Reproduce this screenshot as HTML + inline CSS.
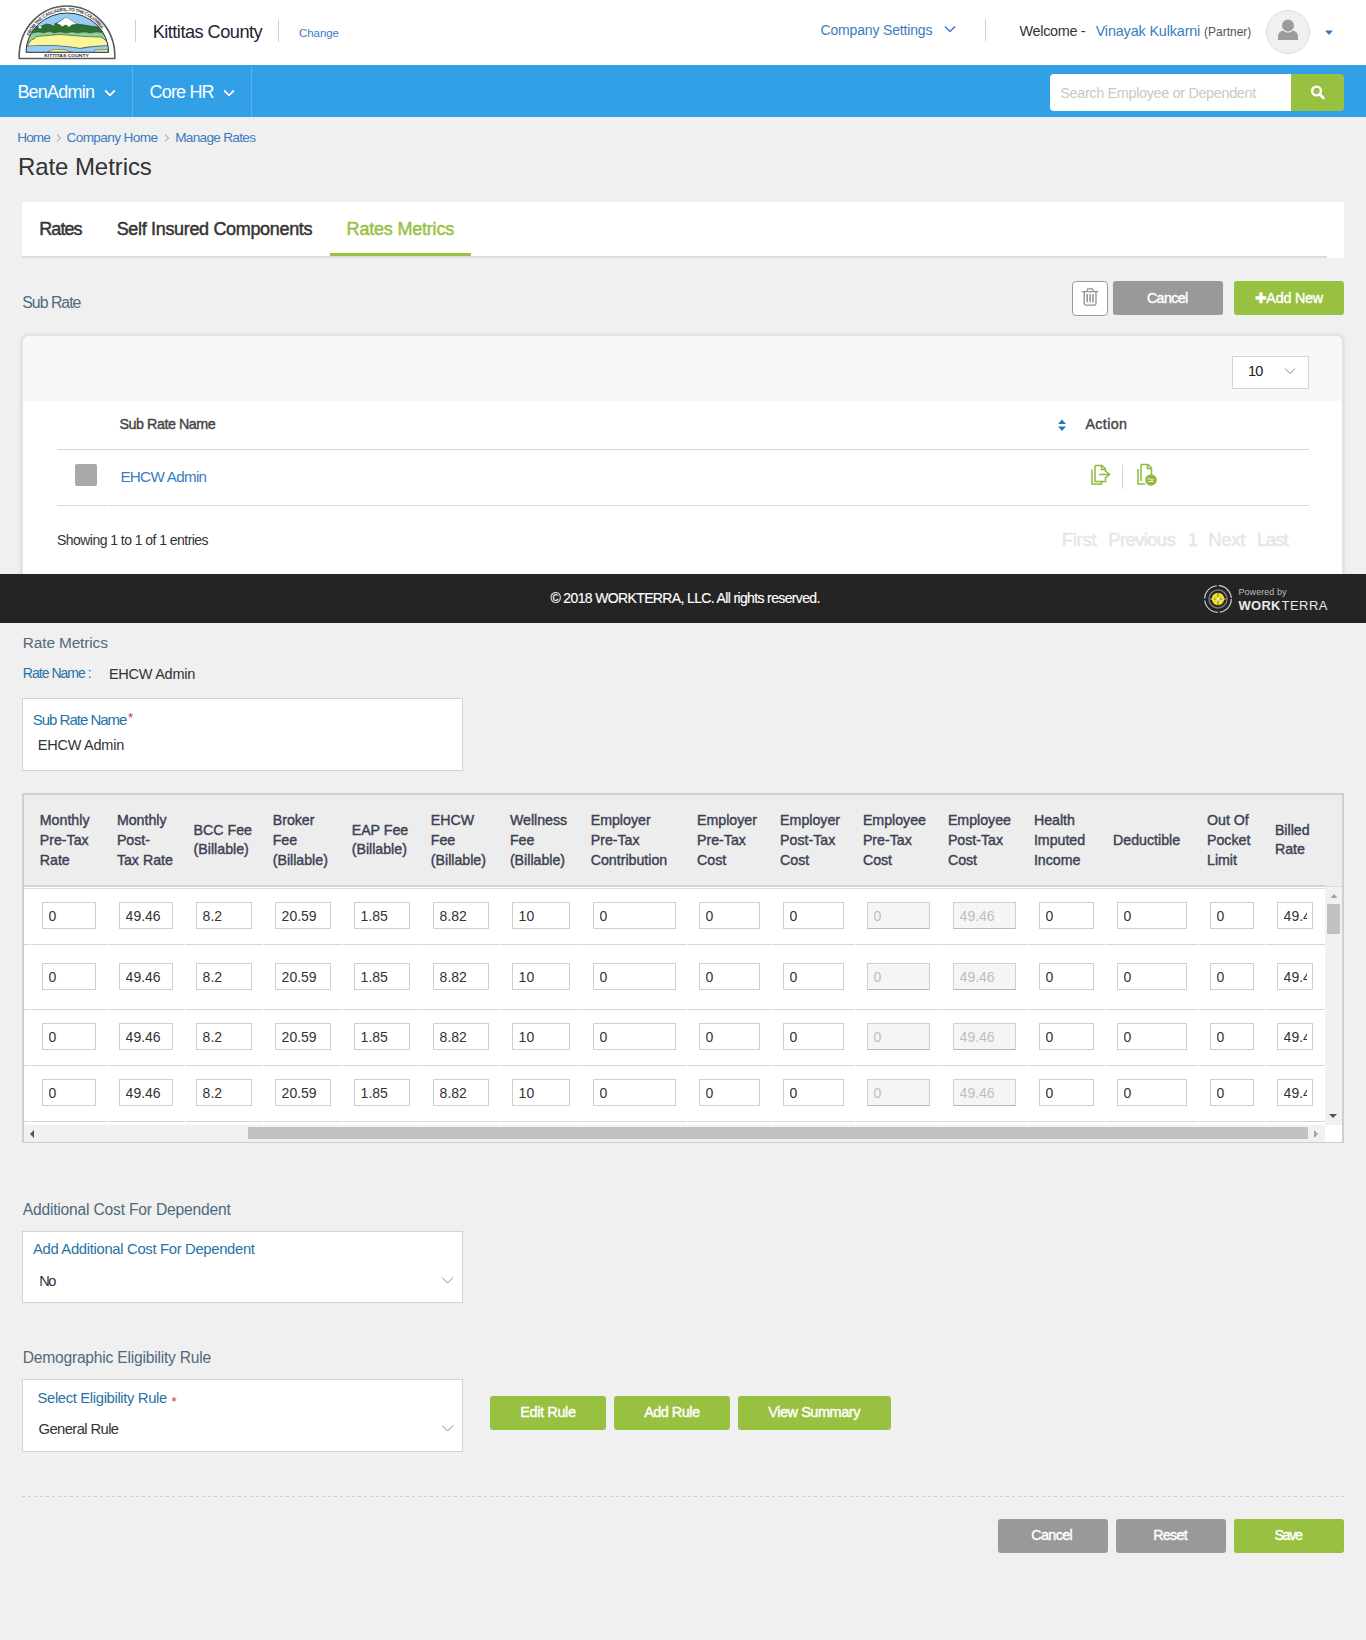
<!DOCTYPE html>
<html><head><meta charset="utf-8"><title>Rate Metrics</title>
<style>
html,body{margin:0;padding:0}
body{width:1366px;height:1640px;position:relative;overflow:hidden;background:#f0f0f0;font-family:"Liberation Sans",sans-serif}
.t{position:absolute;white-space:nowrap;line-height:1}
.b{position:absolute}
svg.b{overflow:visible}
</style></head><body>
<div class="b" style="left:0px;top:0px;width:1366px;height:65px;background:#fff"></div>
<svg class="b" style="left:15px;top:0px" width="105" height="65" viewBox="15 0 105 65">
<defs><clipPath id="lc"><path d="M26 52.3 A41.3 39.3 0 0 1 108.6 52.3 Z"/></clipPath></defs>
<path d="M19.2 58.5 L19.2 56 A47.8 50 0 0 1 114.8 56 L114.8 58.5 Z" fill="#fff" stroke="#5a5a5a" stroke-width="1.6"/>
<g clip-path="url(#lc)">
<rect x="15" y="0" width="105" height="65" fill="#98ccf7"/>
<path d="M20 30 L35 26 L40 27 L46 24 L52 25 L57 23 L66 17.3 L73 22 L77 24 L84 25 L90 26 L98 27 L110 29 L110 36 L20 36 Z" fill="#2e7034" stroke="#1d3d20" stroke-width="0.6"/>
<path d="M57 23.5 L66 17.3 L76.5 24 L72 24.5 L69 27 L66 24.5 L62 26.5 L60 24.5 Z" fill="#fff"/>
<path d="M38 27 L40 26 L42 27.5 L40 28.5 Z M51 25 L53 24 L55 25.5 Z" fill="#fff"/>
<path d="M20 36 Q26 31 33 33 Q38 31 44 33 Q49 30 54 33 Q60 31 66 33 Q72 31 78 33 Q84 31 90 33 Q97 31 104 33 L110 34 L110 40 L20 42 Z" fill="#8fd197" stroke="#2b4a2b" stroke-width="0.5"/>
<path d="M27.5 47 Q29 40 34 39 L36 36.5 L60 34.5 L85 36.5 L101 37 L104 39 L107.5 42 L107.5 46 Q90 46 80 48.5 Q55 44 27.5 47 Z" fill="#fbf59a" stroke="#3a3a2a" stroke-width="0.6"/>
<path d="M20 46.5 Q55 43.5 80 48.5 Q95 46 110 45.5 L110 53 L20 53 Z" fill="#98ccf7" stroke="#2a3a4a" stroke-width="0.5"/>
<path d="M47 52.3 Q53 48 60 49.5 Q66 49 72 52.3 Z" fill="#fbf59a" stroke="#3a3a2a" stroke-width="0.5"/>
<path d="M94 52.3 L95 50 L108 49.5 L108 52.3 Z" fill="#fbf59a" stroke="#3a3a2a" stroke-width="0.5"/>
</g>
<path d="M26 52.3 A41.3 39.3 0 0 1 108.6 52.3 Z" fill="none" stroke="#333" stroke-width="1"/>
<path d="M29.5 31 A39 37 0 0 1 105 31" fill="none" stroke="#333" stroke-width="0"/>
<path id="ringp" d="M29.55 36 A41 41 0 0 1 105.05 36" fill="none"/><text font-family="Liberation Sans" font-weight="bold" font-size="4.6" fill="#333" letter-spacing="0.1"><textPath href="#ringp" textLength="88" lengthAdjust="spacing">FROM THE CASCADES...TO THE COLUMBIA</textPath></text>
<text x="44.2" y="57.2" font-family="Liberation Sans" font-weight="bold" font-size="4.4" fill="#333" textLength="44.6" lengthAdjust="spacingAndGlyphs">KITTITAS COUNTY</text>
</svg>
<div class="b" style="left:135px;top:20px;width:1px;height:22px;background:#d0d0d0"></div>
<div class="t" style="left:152.7px;top:22.99px;font-size:18.2px;color:#1f2235;letter-spacing:-0.524px;">Kittitas County</div>
<div class="b" style="left:278px;top:20px;width:1px;height:22px;background:#d0d0d0"></div>
<div class="t" style="left:299.0px;top:28.47px;font-size:11.5px;color:#3a7cc0;letter-spacing:-0.057px;">Change</div>
<div class="t" style="left:820.5px;top:23.15px;font-size:14px;color:#3a7cc0;letter-spacing:-0.160px;">Company Settings</div>
<svg class="b" style="left:944px;top:25px" width="12" height="8" viewBox="0 0 12 8"><path d="M1 1.5 L6 6.5 L11 1.5" fill="none" stroke="#3a7cc0" stroke-width="1.5"/></svg>
<div class="b" style="left:985px;top:19px;width:1px;height:22px;background:#d0d0d0"></div>
<div class="t" style="left:1019.6px;top:24.01px;font-size:14.4px;color:#333333;letter-spacing:-0.319px;">Welcome -</div>
<div class="t" style="left:1095.7px;top:24.01px;font-size:14.4px;color:#3a7cc0;letter-spacing:-0.153px;">Vinayak Kulkarni</div>
<div class="t" style="left:1204.0px;top:26.04px;font-size:12px;color:#555;">(Partner)</div>
<div class="b" style="left:1266px;top:10px;width:44px;height:44px;background:#f0f0f0;border:1px solid #dddddd;border-radius:50%;box-sizing:border-box"></div>
<svg class="b" style="left:1266px;top:10px" width="44" height="44" viewBox="0 0 44 44"><path d="M12 30 L12 27 Q12 21 18 20.5 L26 20.5 Q32 21 32 27 L32 30 Z" fill="#9c9c9c"/><circle cx="22" cy="15.5" r="6.6" fill="#9c9c9c" stroke="#f0f0f0" stroke-width="1.2"/></svg>
<svg class="b" style="left:1324px;top:29.5px" width="10" height="6" viewBox="0 0 10 6"><path d="M1 0.5 L9 0.5 L5 5 Z" fill="#3a7cc0"/></svg>
<div class="b" style="left:0px;top:65px;width:1366px;height:52px;background:#32a0e6"></div>
<div class="b" style="left:132px;top:67px;width:1px;height:50px;background:#5cb3ec"></div>
<div class="b" style="left:251px;top:67px;width:1px;height:50px;background:#5cb3ec"></div>
<div class="t" style="left:17.4px;top:82.76px;font-size:18px;color:#fff;letter-spacing:-0.793px;">BenAdmin</div>
<svg class="b" style="left:104px;top:89px" width="12" height="8" viewBox="0 0 12 8"><path d="M1.2 1.5 L6 6.3 L10.8 1.5" fill="none" stroke="#fff" stroke-width="1.8"/></svg>
<div class="t" style="left:149.6px;top:82.76px;font-size:18px;color:#fff;letter-spacing:-0.836px;">Core HR</div>
<svg class="b" style="left:223px;top:89px" width="12" height="8" viewBox="0 0 12 8"><path d="M1.2 1.5 L6 6.3 L10.8 1.5" fill="none" stroke="#fff" stroke-width="1.8"/></svg>
<div class="b" style="left:1050px;top:74px;width:246px;height:37px;background:#fff;border-radius:4px 0 0 4px"></div>
<div class="t" style="left:1060.3px;top:85.81px;font-size:14.4px;color:#c8c8c8;letter-spacing:-0.331px;">Search Employee or Dependent</div>
<div class="b" style="left:1291px;top:74px;width:53px;height:37px;background:#99c141;border-radius:0 4px 4px 0"></div>
<svg class="b" style="left:1310px;top:85.3px" width="16" height="14" viewBox="0 0 16 14"><circle cx="6.5" cy="6" r="4.4" fill="none" stroke="#fff" stroke-width="2.4"/><path d="M9.5 9 L13.5 13" stroke="#fff" stroke-width="2.6" stroke-linecap="round"/></svg>
<div class="t" style="left:17.2px;top:130.79px;font-size:13.6px;color:#3a7cc0;letter-spacing:-0.860px;">Home</div>
<svg class="b" style="left:55px;top:133px" width="8" height="10" viewBox="0 0 8 10"><path d="M2 1.5 L5.5 5 L2 8.5" fill="none" stroke="#b5b5b5" stroke-width="1.1"/></svg>
<div class="t" style="left:66.5px;top:130.79px;font-size:13.6px;color:#3a7cc0;letter-spacing:-0.615px;">Company Home</div>
<svg class="b" style="left:163px;top:133px" width="8" height="10" viewBox="0 0 8 10"><path d="M2 1.5 L5.5 5 L2 8.5" fill="none" stroke="#b5b5b5" stroke-width="1.1"/></svg>
<div class="t" style="left:175.2px;top:130.79px;font-size:13.6px;color:#3a7cc0;letter-spacing:-0.696px;">Manage Rates</div>
<div class="t" style="left:18.0px;top:155.48px;font-size:24px;color:#333;letter-spacing:-0.082px;">Rate Metrics</div>
<div class="b" style="left:22px;top:202px;width:1322px;height:56px;background:#fff"></div>
<div class="b" style="left:22px;top:256px;width:1305px;height:2px;background:#dcdcdc"></div>
<div class="t" style="left:39.2px;top:219.86px;font-size:18px;color:#333;letter-spacing:-0.906px;-webkit-text-stroke:0.45px #333;">Rates</div>
<div class="t" style="left:116.7px;top:219.86px;font-size:18px;color:#333;letter-spacing:-0.333px;-webkit-text-stroke:0.45px #333;">Self Insured Components</div>
<div class="t" style="left:346.6px;top:219.86px;font-size:18px;color:#99c141;letter-spacing:-0.202px;-webkit-text-stroke:0.45px #99c141;">Rates Metrics</div>
<div class="b" style="left:330px;top:253px;width:141px;height:3px;background:#99c141"></div>
<div class="t" style="left:22.3px;top:294.63px;font-size:15.8px;color:#4f6a7d;letter-spacing:-0.968px;">Sub Rate</div>
<div class="b" style="left:1072px;top:281px;width:36px;height:35px;background:#fff;border:1px solid #9a9a9a;border-radius:4px;box-sizing:border-box"></div>
<svg class="b" style="left:1078px;top:284px" width="24" height="26" viewBox="1078 284 24 26"><path d="M1082.3 291.6 L1097.8 291.6" stroke="#929292" stroke-width="1.3" stroke-linecap="round"/><path d="M1086.6 291.4 L1087.8 288.8 L1092.4 288.8 L1093.6 291.4" fill="none" stroke="#929292" stroke-width="1.2"/><path d="M1084.2 292 L1084.2 303.5 Q1084.2 305.2 1086 305.2 L1094.2 305.2 Q1096 305.2 1096 303.5 L1096 292" fill="none" stroke="#929292" stroke-width="1.3"/><path d="M1087.2 294.6 L1087.2 301.8 M1090.1 294.6 L1090.1 301.8 M1093 294.6 L1093 301.8" stroke="#929292" stroke-width="1.5" stroke-linecap="round"/></svg>
<div class="b" style="left:1113px;top:281px;width:110px;height:34px;background:#999;border-radius:3px"></div>
<div class="t" style="left:1146.9px;top:291.10px;font-size:14.3px;color:#fff;letter-spacing:-0.643px;-webkit-text-stroke:0.4px #fff;">Cancel</div>
<div class="b" style="left:1234px;top:281px;width:110px;height:34px;background:#99c141;border-radius:3px"></div>
<div class="t" style="left:1254.6px;top:291.10px;font-size:14.3px;color:#fff;letter-spacing:-0.222px;-webkit-text-stroke:0.4px #fff;">✚Add New</div>
<div class="b" style="left:21px;top:334px;width:1323px;height:256px;background:#fff;border:2px solid #e3e3e3;border-radius:8px;box-sizing:border-box;box-shadow:0 0 3px rgba(0,0,0,.12)"></div>
<div class="b" style="left:23px;top:336px;width:1319px;height:65px;background:#f7f9f9;border-radius:6px 6px 0 0"></div>
<div class="b" style="left:1232px;top:356px;width:77px;height:33px;background:#fff;border:1px solid #d5d5d5;box-sizing:border-box"></div>
<div class="t" style="left:1248.0px;top:363.53px;font-size:14.5px;color:#222;letter-spacing:-0.729px;">10</div>
<svg class="b" style="left:1284px;top:367px" width="12" height="9" viewBox="0 0 12 9"><path d="M1 1.5 L6 6.5 L11 1.5" fill="none" stroke="#6f7c8a" stroke-width="0.9"/></svg>
<div class="t" style="left:119.5px;top:417.10px;font-size:14.3px;color:#444;letter-spacing:-0.462px;-webkit-text-stroke:0.4px #444;">Sub Rate Name</div>
<svg class="b" style="left:1057px;top:419px" width="11" height="13" viewBox="0 0 11 13"><path d="M1 5 L5 0.5 L9 5 Z" fill="#1f7bb8"/><path d="M1 7.5 L5 12 L9 7.5 Z" fill="#1f7bb8"/></svg>
<div class="t" style="left:1085.5px;top:417.00px;font-size:14.3px;color:#444;letter-spacing:0.331px;-webkit-text-stroke:0.4px #444;">Action</div>
<div class="b" style="left:57px;top:449px;width:1252px;height:1px;background:#d5d5d5"></div>
<div class="b" style="left:75px;top:464px;width:22px;height:22px;background:#a9a9a9;border-radius:2px"></div>
<div class="t" style="left:120.4px;top:469.33px;font-size:15.2px;color:#3a7cc0;letter-spacing:-0.690px;">EHCW Admin</div>
<svg class="b" style="left:1089px;top:463px" width="24" height="24" viewBox="0 0 24 24">
<path d="M3 6.5 L3 21 L12.5 21 L12.5 18.5" fill="none" stroke="#8dbb3a" stroke-width="1.5"/>
<path d="M6 2.5 L13 2.5 L16.5 6 L16.5 9" fill="none" stroke="#8dbb3a" stroke-width="1.5"/>
<path d="M6 2.5 L6 18.5 L16.5 18.5 L16.5 14" fill="none" stroke="#8dbb3a" stroke-width="1.5"/>
<path d="M12.5 2.5 L12.5 6.5 L16.5 6.5" fill="none" stroke="#8dbb3a" stroke-width="1.5"/>
<path d="M10 11.5 L20 11.5 M17 8.5 L20.5 11.5 L17 14.5" fill="none" stroke="#8dbb3a" stroke-width="1.5"/>
</svg>
<div class="b" style="left:1122px;top:465px;width:1px;height:24px;background:#d5d5d5"></div>
<svg class="b" style="left:1135px;top:462px" width="24" height="25" viewBox="0 0 24 25">
<path d="M3 7 L3 22 L10 22" fill="none" stroke="#8dbb3a" stroke-width="1.5"/>
<path d="M6 2.5 L13 2.5 L16.5 6 L16.5 12" fill="none" stroke="#8dbb3a" stroke-width="1.5"/>
<path d="M6 2.5 L6 19" fill="none" stroke="#8dbb3a" stroke-width="1.5"/>
<path d="M12.5 2.5 L12.5 6.5 L16.5 6.5" fill="none" stroke="#8dbb3a" stroke-width="1.5"/>
<circle cx="16" cy="18" r="5.8" fill="#8dbb3a"/>
<path d="M12.5 17.3 Q14 15.8 15.5 17.3 Q17 18.8 18.5 17.3 M13.5 19.5 L18.5 19.5" fill="none" stroke="#fff" stroke-width="0.9"/>
</svg>
<div class="b" style="left:57px;top:505px;width:51px;height:1px;background:#dcdcdc"></div>
<div class="b" style="left:109px;top:505px;width:1200px;height:1px;background:#dcdcdc"></div>
<div class="t" style="left:57.0px;top:532.95px;font-size:14px;color:#333;letter-spacing:-0.545px;">Showing 1 to 1 of 1 entries</div>
<div class="t" style="left:1061.7px;top:531.14px;font-size:18.5px;color:#e6e6e6;letter-spacing:-0.266px;-webkit-text-stroke:0.45px #e6e6e6;">First</div>
<div class="t" style="left:1108.2px;top:531.14px;font-size:18.5px;color:#e6e6e6;letter-spacing:-0.626px;-webkit-text-stroke:0.45px #e6e6e6;">Previous</div>
<div class="t" style="left:1187.7px;top:531.14px;font-size:18.5px;color:#e6e6e6;letter-spacing:-1.889px;-webkit-text-stroke:0.45px #e6e6e6;">1</div>
<div class="t" style="left:1208.2px;top:531.14px;font-size:18.5px;color:#e6e6e6;letter-spacing:-0.313px;-webkit-text-stroke:0.45px #e6e6e6;">Next</div>
<div class="t" style="left:1256.9px;top:531.14px;font-size:18.5px;color:#e6e6e6;letter-spacing:-1.056px;-webkit-text-stroke:0.45px #e6e6e6;">Last</div>
<div class="b" style="left:0px;top:574px;width:1366px;height:49px;background:#242424"></div>
<div class="t" style="left:550.4px;top:591.25px;font-size:14px;color:#fff;letter-spacing:-0.634px;-webkit-text-stroke:0.15px #fff;">© 2018 WORKTERRA, LLC. All rights reserved.</div>
<svg class="b" style="left:1203px;top:584px" width="30" height="30" viewBox="0 0 30 30">
<circle cx="15" cy="15" r="13.3" fill="none" stroke="#d0d0d0" stroke-width="1.2" stroke-dasharray="19 2"/>
<circle cx="15" cy="15" r="9" fill="none" stroke="#777" stroke-width="1.5"/>
<circle cx="15" cy="15" r="6.2" fill="#f2e21a"/>
<path d="M15 9 L15 21 M9 15 L21 15" stroke="#6a6a3a" stroke-width="0.9"/>
<path d="M15 12.5 L15.8 14.2 L17.5 15 L15.8 15.8 L15 17.5 L14.2 15.8 L12.5 15 L14.2 14.2 Z" fill="#fff"/>
<path d="M7.5 15 L11 15 M19 15 L22.5 15" stroke="#fff" stroke-width="1"/>
</svg>
<div class="t" style="left:1238.5px;top:587.88px;font-size:9px;color:#bdbdbd;letter-spacing:0.052px;">Powered by</div>
<div class="t" style="left:1238.5px;top:598.50px;font-size:13px;color:#e8e8e8;font-weight:bold;letter-spacing:0.281px;">WORK</div>
<div class="t" style="left:1281.5px;top:598.50px;font-size:13px;color:#e8e8e8;letter-spacing:0.485px;">TERRA</div>
<div class="t" style="left:22.8px;top:634.76px;font-size:15.4px;color:#4f6a7d;letter-spacing:-0.121px;">Rate Metrics</div>
<div class="t" style="left:22.8px;top:665.85px;font-size:14px;color:#2673a6;letter-spacing:-0.969px;">Rate Name :</div>
<div class="t" style="left:108.9px;top:666.73px;font-size:14.5px;color:#333;letter-spacing:-0.248px;">EHCW Admin</div>
<div class="b" style="left:22px;top:698px;width:441px;height:73px;background:#fff;border:1px solid #d3d3d3;box-sizing:border-box"></div>
<div class="t" style="left:32.8px;top:711.60px;font-size:15px;color:#2673a6;letter-spacing:-1.010px;">Sub Rate Name</div>
<div class="t" style="left:128.0px;top:711.00px;font-size:13px;color:#e3262b;">*</div>
<div class="t" style="left:37.8px;top:738.33px;font-size:14.5px;color:#333;letter-spacing:-0.248px;">EHCW Admin</div>
<div class="b" style="left:22px;top:793px;width:1322px;height:350px;background:#fff;border:2px solid #cfcfcf;box-sizing:border-box"></div>
<div class="b" style="left:24px;top:795px;width:1318px;height:90px;background:#ededed"></div>
<div class="b" style="left:24px;top:885px;width:1301px;height:2px;background:#d4d4d4"></div>
<div class="b" style="left:24px;top:888px;width:1301px;height:1px;background:#dedede"></div>
<div class="b" style="left:1325px;top:885px;width:17px;height:1px;background:#ededed"></div>
<div class="b" style="left:1325px;top:886px;width:17px;height:1px;background:#d9d9d9"></div>
<div class="t" style="left:39.8px;top:812.88px;font-size:14.2px;color:#3c4152;-webkit-text-stroke:0.4px #3c4152;">Monthly</div>
<div class="t" style="left:39.8px;top:832.58px;font-size:14.2px;color:#3c4152;-webkit-text-stroke:0.4px #3c4152;">Pre-Tax</div>
<div class="t" style="left:39.8px;top:852.58px;font-size:14.2px;color:#3c4152;-webkit-text-stroke:0.4px #3c4152;">Rate</div>
<div class="t" style="left:116.9px;top:812.88px;font-size:14.2px;color:#3c4152;-webkit-text-stroke:0.4px #3c4152;">Monthly</div>
<div class="t" style="left:116.9px;top:832.58px;font-size:14.2px;color:#3c4152;-webkit-text-stroke:0.4px #3c4152;">Post-</div>
<div class="t" style="left:116.9px;top:852.58px;font-size:14.2px;color:#3c4152;-webkit-text-stroke:0.4px #3c4152;">Tax Rate</div>
<div class="t" style="left:193.6px;top:822.78px;font-size:14.2px;color:#3c4152;-webkit-text-stroke:0.4px #3c4152;">BCC Fee</div>
<div class="t" style="left:193.6px;top:842.48px;font-size:14.2px;color:#3c4152;-webkit-text-stroke:0.4px #3c4152;">(Billable)</div>
<div class="t" style="left:272.7px;top:812.88px;font-size:14.2px;color:#3c4152;-webkit-text-stroke:0.4px #3c4152;">Broker</div>
<div class="t" style="left:272.7px;top:832.58px;font-size:14.2px;color:#3c4152;-webkit-text-stroke:0.4px #3c4152;">Fee</div>
<div class="t" style="left:272.7px;top:852.58px;font-size:14.2px;color:#3c4152;-webkit-text-stroke:0.4px #3c4152;">(Billable)</div>
<div class="t" style="left:351.7px;top:822.78px;font-size:14.2px;color:#3c4152;-webkit-text-stroke:0.4px #3c4152;">EAP Fee</div>
<div class="t" style="left:351.7px;top:842.48px;font-size:14.2px;color:#3c4152;-webkit-text-stroke:0.4px #3c4152;">(Billable)</div>
<div class="t" style="left:430.8px;top:812.88px;font-size:14.2px;color:#3c4152;-webkit-text-stroke:0.4px #3c4152;">EHCW</div>
<div class="t" style="left:430.8px;top:832.58px;font-size:14.2px;color:#3c4152;-webkit-text-stroke:0.4px #3c4152;">Fee</div>
<div class="t" style="left:430.8px;top:852.58px;font-size:14.2px;color:#3c4152;-webkit-text-stroke:0.4px #3c4152;">(Billable)</div>
<div class="t" style="left:509.9px;top:812.88px;font-size:14.2px;color:#3c4152;-webkit-text-stroke:0.4px #3c4152;">Wellness</div>
<div class="t" style="left:509.9px;top:832.58px;font-size:14.2px;color:#3c4152;-webkit-text-stroke:0.4px #3c4152;">Fee</div>
<div class="t" style="left:509.9px;top:852.58px;font-size:14.2px;color:#3c4152;-webkit-text-stroke:0.4px #3c4152;">(Billable)</div>
<div class="t" style="left:590.7px;top:812.88px;font-size:14.2px;color:#3c4152;-webkit-text-stroke:0.4px #3c4152;">Employer</div>
<div class="t" style="left:590.7px;top:832.58px;font-size:14.2px;color:#3c4152;-webkit-text-stroke:0.4px #3c4152;">Pre-Tax</div>
<div class="t" style="left:590.7px;top:852.58px;font-size:14.2px;color:#3c4152;-webkit-text-stroke:0.4px #3c4152;">Contribution</div>
<div class="t" style="left:697.0px;top:812.88px;font-size:14.2px;color:#3c4152;-webkit-text-stroke:0.4px #3c4152;">Employer</div>
<div class="t" style="left:697.0px;top:832.58px;font-size:14.2px;color:#3c4152;-webkit-text-stroke:0.4px #3c4152;">Pre-Tax</div>
<div class="t" style="left:697.0px;top:852.58px;font-size:14.2px;color:#3c4152;-webkit-text-stroke:0.4px #3c4152;">Cost</div>
<div class="t" style="left:780.1px;top:812.88px;font-size:14.2px;color:#3c4152;-webkit-text-stroke:0.4px #3c4152;">Employer</div>
<div class="t" style="left:780.1px;top:832.58px;font-size:14.2px;color:#3c4152;-webkit-text-stroke:0.4px #3c4152;">Post-Tax</div>
<div class="t" style="left:780.1px;top:852.58px;font-size:14.2px;color:#3c4152;-webkit-text-stroke:0.4px #3c4152;">Cost</div>
<div class="t" style="left:862.9px;top:812.88px;font-size:14.2px;color:#3c4152;-webkit-text-stroke:0.4px #3c4152;">Employee</div>
<div class="t" style="left:862.9px;top:832.58px;font-size:14.2px;color:#3c4152;-webkit-text-stroke:0.4px #3c4152;">Pre-Tax</div>
<div class="t" style="left:862.9px;top:852.58px;font-size:14.2px;color:#3c4152;-webkit-text-stroke:0.4px #3c4152;">Cost</div>
<div class="t" style="left:947.9px;top:812.88px;font-size:14.2px;color:#3c4152;-webkit-text-stroke:0.4px #3c4152;">Employee</div>
<div class="t" style="left:947.9px;top:832.58px;font-size:14.2px;color:#3c4152;-webkit-text-stroke:0.4px #3c4152;">Post-Tax</div>
<div class="t" style="left:947.9px;top:852.58px;font-size:14.2px;color:#3c4152;-webkit-text-stroke:0.4px #3c4152;">Cost</div>
<div class="t" style="left:1033.9px;top:812.88px;font-size:14.2px;color:#3c4152;-webkit-text-stroke:0.4px #3c4152;">Health</div>
<div class="t" style="left:1033.9px;top:832.58px;font-size:14.2px;color:#3c4152;-webkit-text-stroke:0.4px #3c4152;">Imputed</div>
<div class="t" style="left:1033.9px;top:852.58px;font-size:14.2px;color:#3c4152;-webkit-text-stroke:0.4px #3c4152;">Income</div>
<div class="t" style="left:1113.1px;top:832.58px;font-size:14.2px;color:#3c4152;-webkit-text-stroke:0.4px #3c4152;">Deductible</div>
<div class="t" style="left:1207.0px;top:812.88px;font-size:14.2px;color:#3c4152;-webkit-text-stroke:0.4px #3c4152;">Out Of</div>
<div class="t" style="left:1207.0px;top:832.58px;font-size:14.2px;color:#3c4152;-webkit-text-stroke:0.4px #3c4152;">Pocket</div>
<div class="t" style="left:1207.0px;top:852.58px;font-size:14.2px;color:#3c4152;-webkit-text-stroke:0.4px #3c4152;">Limit</div>
<div class="t" style="left:1274.9px;top:822.78px;font-size:14.2px;color:#3c4152;-webkit-text-stroke:0.4px #3c4152;">Billed</div>
<div class="t" style="left:1274.9px;top:842.48px;font-size:14.2px;color:#3c4152;-webkit-text-stroke:0.4px #3c4152;">Rate</div>
<div class="b" style="left:24px;top:889px;width:1301px;height:236px;overflow:hidden">
<div class="b" style="left:0px;top:55px;width:6px;height:1px;background:#d6d6d6"></div>
<div class="b" style="left:7px;top:55px;width:76px;height:1px;background:#d6d6d6"></div>
<div class="b" style="left:18px;top:13px;width:54px;height:27px;box-sizing:border-box;background:#fff;border:1px solid #cfcfcf;"><div class="b" style="left:5.6px;top:0;width:41.4px;height:25px;overflow:hidden"><div class="t" style="left:0;top:6.25px;font-size:14px;color:#333">0</div></div></div>
<div class="b" style="left:84px;top:55px;width:76px;height:1px;background:#d6d6d6"></div>
<div class="b" style="left:95px;top:13px;width:54px;height:27px;box-sizing:border-box;background:#fff;border:1px solid #cfcfcf;"><div class="b" style="left:5.6px;top:0;width:41.4px;height:25px;overflow:hidden"><div class="t" style="left:0;top:6.25px;font-size:14px;color:#333">49.46</div></div></div>
<div class="b" style="left:161px;top:55px;width:78px;height:1px;background:#d6d6d6"></div>
<div class="b" style="left:172px;top:13px;width:56px;height:27px;box-sizing:border-box;background:#fff;border:1px solid #cfcfcf;"><div class="b" style="left:5.6px;top:0;width:43.4px;height:25px;overflow:hidden"><div class="t" style="left:0;top:6.25px;font-size:14px;color:#333">8.2</div></div></div>
<div class="b" style="left:240px;top:55px;width:78px;height:1px;background:#d6d6d6"></div>
<div class="b" style="left:251px;top:13px;width:56px;height:27px;box-sizing:border-box;background:#fff;border:1px solid #cfcfcf;"><div class="b" style="left:5.6px;top:0;width:43.4px;height:25px;overflow:hidden"><div class="t" style="left:0;top:6.25px;font-size:14px;color:#333">20.59</div></div></div>
<div class="b" style="left:319px;top:55px;width:78px;height:1px;background:#d6d6d6"></div>
<div class="b" style="left:330px;top:13px;width:56px;height:27px;box-sizing:border-box;background:#fff;border:1px solid #cfcfcf;"><div class="b" style="left:5.6px;top:0;width:43.4px;height:25px;overflow:hidden"><div class="t" style="left:0;top:6.25px;font-size:14px;color:#333">1.85</div></div></div>
<div class="b" style="left:398px;top:55px;width:78px;height:1px;background:#d6d6d6"></div>
<div class="b" style="left:409px;top:13px;width:56px;height:27px;box-sizing:border-box;background:#fff;border:1px solid #cfcfcf;"><div class="b" style="left:5.6px;top:0;width:43.4px;height:25px;overflow:hidden"><div class="t" style="left:0;top:6.25px;font-size:14px;color:#333">8.82</div></div></div>
<div class="b" style="left:477px;top:55px;width:80px;height:1px;background:#d6d6d6"></div>
<div class="b" style="left:488px;top:13px;width:58px;height:27px;box-sizing:border-box;background:#fff;border:1px solid #cfcfcf;"><div class="b" style="left:5.6px;top:0;width:45.4px;height:25px;overflow:hidden"><div class="t" style="left:0;top:6.25px;font-size:14px;color:#333">10</div></div></div>
<div class="b" style="left:558px;top:55px;width:105px;height:1px;background:#d6d6d6"></div>
<div class="b" style="left:569px;top:13px;width:83px;height:27px;box-sizing:border-box;background:#fff;border:1px solid #cfcfcf;"><div class="b" style="left:5.6px;top:0;width:70.4px;height:25px;overflow:hidden"><div class="t" style="left:0;top:6.25px;font-size:14px;color:#333">0</div></div></div>
<div class="b" style="left:664px;top:55px;width:83px;height:1px;background:#d6d6d6"></div>
<div class="b" style="left:675px;top:13px;width:61px;height:27px;box-sizing:border-box;background:#fff;border:1px solid #cfcfcf;"><div class="b" style="left:5.6px;top:0;width:48.4px;height:25px;overflow:hidden"><div class="t" style="left:0;top:6.25px;font-size:14px;color:#333">0</div></div></div>
<div class="b" style="left:748px;top:55px;width:83px;height:1px;background:#d6d6d6"></div>
<div class="b" style="left:759px;top:13px;width:61px;height:27px;box-sizing:border-box;background:#fff;border:1px solid #cfcfcf;"><div class="b" style="left:5.6px;top:0;width:48.4px;height:25px;overflow:hidden"><div class="t" style="left:0;top:6.25px;font-size:14px;color:#333">0</div></div></div>
<div class="b" style="left:832px;top:55px;width:85px;height:1px;background:#d6d6d6"></div>
<div class="b" style="left:843px;top:13px;width:63px;height:27px;box-sizing:border-box;background:#f5f5f5;border:1px solid #cfcfcf;border-bottom:1.5px solid #b9b9b9;"><div class="b" style="left:5.6px;top:0;width:50.4px;height:25px;overflow:hidden"><div class="t" style="left:0;top:6.25px;font-size:14px;color:#bdbdbd">0</div></div></div>
<div class="b" style="left:918px;top:55px;width:85px;height:1px;background:#d6d6d6"></div>
<div class="b" style="left:929px;top:13px;width:63px;height:27px;box-sizing:border-box;background:#f5f5f5;border:1px solid #cfcfcf;border-bottom:1.5px solid #b9b9b9;"><div class="b" style="left:5.6px;top:0;width:50.4px;height:25px;overflow:hidden"><div class="t" style="left:0;top:6.25px;font-size:14px;color:#bdbdbd">49.46</div></div></div>
<div class="b" style="left:1004px;top:55px;width:77px;height:1px;background:#d6d6d6"></div>
<div class="b" style="left:1015px;top:13px;width:55px;height:27px;box-sizing:border-box;background:#fff;border:1px solid #cfcfcf;"><div class="b" style="left:5.6px;top:0;width:42.4px;height:25px;overflow:hidden"><div class="t" style="left:0;top:6.25px;font-size:14px;color:#333">0</div></div></div>
<div class="b" style="left:1082px;top:55px;width:92px;height:1px;background:#d6d6d6"></div>
<div class="b" style="left:1093px;top:13px;width:70px;height:27px;box-sizing:border-box;background:#fff;border:1px solid #cfcfcf;"><div class="b" style="left:5.6px;top:0;width:57.4px;height:25px;overflow:hidden"><div class="t" style="left:0;top:6.25px;font-size:14px;color:#333">0</div></div></div>
<div class="b" style="left:1175px;top:55px;width:66px;height:1px;background:#d6d6d6"></div>
<div class="b" style="left:1186px;top:13px;width:44px;height:27px;box-sizing:border-box;background:#fff;border:1px solid #cfcfcf;"><div class="b" style="left:5.6px;top:0;width:31.4px;height:25px;overflow:hidden"><div class="t" style="left:0;top:6.25px;font-size:14px;color:#333">0</div></div></div>
<div class="b" style="left:1242px;top:55px;width:74px;height:1px;background:#d6d6d6"></div>
<div class="b" style="left:1253px;top:13px;width:36px;height:27px;box-sizing:border-box;background:#fff;border:1px solid #cfcfcf;"><div class="b" style="left:5.6px;top:0;width:23.4px;height:25px;overflow:hidden"><div class="t" style="left:0;top:6.25px;font-size:14px;color:#333">49.4</div></div></div>
<div class="b" style="left:0px;top:120px;width:6px;height:1px;background:#d6d6d6"></div>
<div class="b" style="left:7px;top:120px;width:76px;height:1px;background:#d6d6d6"></div>
<div class="b" style="left:18px;top:74px;width:54px;height:27px;box-sizing:border-box;background:#fff;border:1px solid #cfcfcf;"><div class="b" style="left:5.6px;top:0;width:41.4px;height:25px;overflow:hidden"><div class="t" style="left:0;top:6.25px;font-size:14px;color:#333">0</div></div></div>
<div class="b" style="left:84px;top:120px;width:76px;height:1px;background:#d6d6d6"></div>
<div class="b" style="left:95px;top:74px;width:54px;height:27px;box-sizing:border-box;background:#fff;border:1px solid #cfcfcf;"><div class="b" style="left:5.6px;top:0;width:41.4px;height:25px;overflow:hidden"><div class="t" style="left:0;top:6.25px;font-size:14px;color:#333">49.46</div></div></div>
<div class="b" style="left:161px;top:120px;width:78px;height:1px;background:#d6d6d6"></div>
<div class="b" style="left:172px;top:74px;width:56px;height:27px;box-sizing:border-box;background:#fff;border:1px solid #cfcfcf;"><div class="b" style="left:5.6px;top:0;width:43.4px;height:25px;overflow:hidden"><div class="t" style="left:0;top:6.25px;font-size:14px;color:#333">8.2</div></div></div>
<div class="b" style="left:240px;top:120px;width:78px;height:1px;background:#d6d6d6"></div>
<div class="b" style="left:251px;top:74px;width:56px;height:27px;box-sizing:border-box;background:#fff;border:1px solid #cfcfcf;"><div class="b" style="left:5.6px;top:0;width:43.4px;height:25px;overflow:hidden"><div class="t" style="left:0;top:6.25px;font-size:14px;color:#333">20.59</div></div></div>
<div class="b" style="left:319px;top:120px;width:78px;height:1px;background:#d6d6d6"></div>
<div class="b" style="left:330px;top:74px;width:56px;height:27px;box-sizing:border-box;background:#fff;border:1px solid #cfcfcf;"><div class="b" style="left:5.6px;top:0;width:43.4px;height:25px;overflow:hidden"><div class="t" style="left:0;top:6.25px;font-size:14px;color:#333">1.85</div></div></div>
<div class="b" style="left:398px;top:120px;width:78px;height:1px;background:#d6d6d6"></div>
<div class="b" style="left:409px;top:74px;width:56px;height:27px;box-sizing:border-box;background:#fff;border:1px solid #cfcfcf;"><div class="b" style="left:5.6px;top:0;width:43.4px;height:25px;overflow:hidden"><div class="t" style="left:0;top:6.25px;font-size:14px;color:#333">8.82</div></div></div>
<div class="b" style="left:477px;top:120px;width:80px;height:1px;background:#d6d6d6"></div>
<div class="b" style="left:488px;top:74px;width:58px;height:27px;box-sizing:border-box;background:#fff;border:1px solid #cfcfcf;"><div class="b" style="left:5.6px;top:0;width:45.4px;height:25px;overflow:hidden"><div class="t" style="left:0;top:6.25px;font-size:14px;color:#333">10</div></div></div>
<div class="b" style="left:558px;top:120px;width:105px;height:1px;background:#d6d6d6"></div>
<div class="b" style="left:569px;top:74px;width:83px;height:27px;box-sizing:border-box;background:#fff;border:1px solid #cfcfcf;"><div class="b" style="left:5.6px;top:0;width:70.4px;height:25px;overflow:hidden"><div class="t" style="left:0;top:6.25px;font-size:14px;color:#333">0</div></div></div>
<div class="b" style="left:664px;top:120px;width:83px;height:1px;background:#d6d6d6"></div>
<div class="b" style="left:675px;top:74px;width:61px;height:27px;box-sizing:border-box;background:#fff;border:1px solid #cfcfcf;"><div class="b" style="left:5.6px;top:0;width:48.4px;height:25px;overflow:hidden"><div class="t" style="left:0;top:6.25px;font-size:14px;color:#333">0</div></div></div>
<div class="b" style="left:748px;top:120px;width:83px;height:1px;background:#d6d6d6"></div>
<div class="b" style="left:759px;top:74px;width:61px;height:27px;box-sizing:border-box;background:#fff;border:1px solid #cfcfcf;"><div class="b" style="left:5.6px;top:0;width:48.4px;height:25px;overflow:hidden"><div class="t" style="left:0;top:6.25px;font-size:14px;color:#333">0</div></div></div>
<div class="b" style="left:832px;top:120px;width:85px;height:1px;background:#d6d6d6"></div>
<div class="b" style="left:843px;top:74px;width:63px;height:27px;box-sizing:border-box;background:#f5f5f5;border:1px solid #cfcfcf;border-bottom:1.5px solid #b9b9b9;"><div class="b" style="left:5.6px;top:0;width:50.4px;height:25px;overflow:hidden"><div class="t" style="left:0;top:6.25px;font-size:14px;color:#bdbdbd">0</div></div></div>
<div class="b" style="left:918px;top:120px;width:85px;height:1px;background:#d6d6d6"></div>
<div class="b" style="left:929px;top:74px;width:63px;height:27px;box-sizing:border-box;background:#f5f5f5;border:1px solid #cfcfcf;border-bottom:1.5px solid #b9b9b9;"><div class="b" style="left:5.6px;top:0;width:50.4px;height:25px;overflow:hidden"><div class="t" style="left:0;top:6.25px;font-size:14px;color:#bdbdbd">49.46</div></div></div>
<div class="b" style="left:1004px;top:120px;width:77px;height:1px;background:#d6d6d6"></div>
<div class="b" style="left:1015px;top:74px;width:55px;height:27px;box-sizing:border-box;background:#fff;border:1px solid #cfcfcf;"><div class="b" style="left:5.6px;top:0;width:42.4px;height:25px;overflow:hidden"><div class="t" style="left:0;top:6.25px;font-size:14px;color:#333">0</div></div></div>
<div class="b" style="left:1082px;top:120px;width:92px;height:1px;background:#d6d6d6"></div>
<div class="b" style="left:1093px;top:74px;width:70px;height:27px;box-sizing:border-box;background:#fff;border:1px solid #cfcfcf;"><div class="b" style="left:5.6px;top:0;width:57.4px;height:25px;overflow:hidden"><div class="t" style="left:0;top:6.25px;font-size:14px;color:#333">0</div></div></div>
<div class="b" style="left:1175px;top:120px;width:66px;height:1px;background:#d6d6d6"></div>
<div class="b" style="left:1186px;top:74px;width:44px;height:27px;box-sizing:border-box;background:#fff;border:1px solid #cfcfcf;"><div class="b" style="left:5.6px;top:0;width:31.4px;height:25px;overflow:hidden"><div class="t" style="left:0;top:6.25px;font-size:14px;color:#333">0</div></div></div>
<div class="b" style="left:1242px;top:120px;width:74px;height:1px;background:#d6d6d6"></div>
<div class="b" style="left:1253px;top:74px;width:36px;height:27px;box-sizing:border-box;background:#fff;border:1px solid #cfcfcf;"><div class="b" style="left:5.6px;top:0;width:23.4px;height:25px;overflow:hidden"><div class="t" style="left:0;top:6.25px;font-size:14px;color:#333">49.4</div></div></div>
<div class="b" style="left:0px;top:176px;width:6px;height:1px;background:#d6d6d6"></div>
<div class="b" style="left:7px;top:176px;width:76px;height:1px;background:#d6d6d6"></div>
<div class="b" style="left:18px;top:134px;width:54px;height:27px;box-sizing:border-box;background:#fff;border:1px solid #cfcfcf;"><div class="b" style="left:5.6px;top:0;width:41.4px;height:25px;overflow:hidden"><div class="t" style="left:0;top:6.25px;font-size:14px;color:#333">0</div></div></div>
<div class="b" style="left:84px;top:176px;width:76px;height:1px;background:#d6d6d6"></div>
<div class="b" style="left:95px;top:134px;width:54px;height:27px;box-sizing:border-box;background:#fff;border:1px solid #cfcfcf;"><div class="b" style="left:5.6px;top:0;width:41.4px;height:25px;overflow:hidden"><div class="t" style="left:0;top:6.25px;font-size:14px;color:#333">49.46</div></div></div>
<div class="b" style="left:161px;top:176px;width:78px;height:1px;background:#d6d6d6"></div>
<div class="b" style="left:172px;top:134px;width:56px;height:27px;box-sizing:border-box;background:#fff;border:1px solid #cfcfcf;"><div class="b" style="left:5.6px;top:0;width:43.4px;height:25px;overflow:hidden"><div class="t" style="left:0;top:6.25px;font-size:14px;color:#333">8.2</div></div></div>
<div class="b" style="left:240px;top:176px;width:78px;height:1px;background:#d6d6d6"></div>
<div class="b" style="left:251px;top:134px;width:56px;height:27px;box-sizing:border-box;background:#fff;border:1px solid #cfcfcf;"><div class="b" style="left:5.6px;top:0;width:43.4px;height:25px;overflow:hidden"><div class="t" style="left:0;top:6.25px;font-size:14px;color:#333">20.59</div></div></div>
<div class="b" style="left:319px;top:176px;width:78px;height:1px;background:#d6d6d6"></div>
<div class="b" style="left:330px;top:134px;width:56px;height:27px;box-sizing:border-box;background:#fff;border:1px solid #cfcfcf;"><div class="b" style="left:5.6px;top:0;width:43.4px;height:25px;overflow:hidden"><div class="t" style="left:0;top:6.25px;font-size:14px;color:#333">1.85</div></div></div>
<div class="b" style="left:398px;top:176px;width:78px;height:1px;background:#d6d6d6"></div>
<div class="b" style="left:409px;top:134px;width:56px;height:27px;box-sizing:border-box;background:#fff;border:1px solid #cfcfcf;"><div class="b" style="left:5.6px;top:0;width:43.4px;height:25px;overflow:hidden"><div class="t" style="left:0;top:6.25px;font-size:14px;color:#333">8.82</div></div></div>
<div class="b" style="left:477px;top:176px;width:80px;height:1px;background:#d6d6d6"></div>
<div class="b" style="left:488px;top:134px;width:58px;height:27px;box-sizing:border-box;background:#fff;border:1px solid #cfcfcf;"><div class="b" style="left:5.6px;top:0;width:45.4px;height:25px;overflow:hidden"><div class="t" style="left:0;top:6.25px;font-size:14px;color:#333">10</div></div></div>
<div class="b" style="left:558px;top:176px;width:105px;height:1px;background:#d6d6d6"></div>
<div class="b" style="left:569px;top:134px;width:83px;height:27px;box-sizing:border-box;background:#fff;border:1px solid #cfcfcf;"><div class="b" style="left:5.6px;top:0;width:70.4px;height:25px;overflow:hidden"><div class="t" style="left:0;top:6.25px;font-size:14px;color:#333">0</div></div></div>
<div class="b" style="left:664px;top:176px;width:83px;height:1px;background:#d6d6d6"></div>
<div class="b" style="left:675px;top:134px;width:61px;height:27px;box-sizing:border-box;background:#fff;border:1px solid #cfcfcf;"><div class="b" style="left:5.6px;top:0;width:48.4px;height:25px;overflow:hidden"><div class="t" style="left:0;top:6.25px;font-size:14px;color:#333">0</div></div></div>
<div class="b" style="left:748px;top:176px;width:83px;height:1px;background:#d6d6d6"></div>
<div class="b" style="left:759px;top:134px;width:61px;height:27px;box-sizing:border-box;background:#fff;border:1px solid #cfcfcf;"><div class="b" style="left:5.6px;top:0;width:48.4px;height:25px;overflow:hidden"><div class="t" style="left:0;top:6.25px;font-size:14px;color:#333">0</div></div></div>
<div class="b" style="left:832px;top:176px;width:85px;height:1px;background:#d6d6d6"></div>
<div class="b" style="left:843px;top:134px;width:63px;height:27px;box-sizing:border-box;background:#f5f5f5;border:1px solid #cfcfcf;border-bottom:1.5px solid #b9b9b9;"><div class="b" style="left:5.6px;top:0;width:50.4px;height:25px;overflow:hidden"><div class="t" style="left:0;top:6.25px;font-size:14px;color:#bdbdbd">0</div></div></div>
<div class="b" style="left:918px;top:176px;width:85px;height:1px;background:#d6d6d6"></div>
<div class="b" style="left:929px;top:134px;width:63px;height:27px;box-sizing:border-box;background:#f5f5f5;border:1px solid #cfcfcf;border-bottom:1.5px solid #b9b9b9;"><div class="b" style="left:5.6px;top:0;width:50.4px;height:25px;overflow:hidden"><div class="t" style="left:0;top:6.25px;font-size:14px;color:#bdbdbd">49.46</div></div></div>
<div class="b" style="left:1004px;top:176px;width:77px;height:1px;background:#d6d6d6"></div>
<div class="b" style="left:1015px;top:134px;width:55px;height:27px;box-sizing:border-box;background:#fff;border:1px solid #cfcfcf;"><div class="b" style="left:5.6px;top:0;width:42.4px;height:25px;overflow:hidden"><div class="t" style="left:0;top:6.25px;font-size:14px;color:#333">0</div></div></div>
<div class="b" style="left:1082px;top:176px;width:92px;height:1px;background:#d6d6d6"></div>
<div class="b" style="left:1093px;top:134px;width:70px;height:27px;box-sizing:border-box;background:#fff;border:1px solid #cfcfcf;"><div class="b" style="left:5.6px;top:0;width:57.4px;height:25px;overflow:hidden"><div class="t" style="left:0;top:6.25px;font-size:14px;color:#333">0</div></div></div>
<div class="b" style="left:1175px;top:176px;width:66px;height:1px;background:#d6d6d6"></div>
<div class="b" style="left:1186px;top:134px;width:44px;height:27px;box-sizing:border-box;background:#fff;border:1px solid #cfcfcf;"><div class="b" style="left:5.6px;top:0;width:31.4px;height:25px;overflow:hidden"><div class="t" style="left:0;top:6.25px;font-size:14px;color:#333">0</div></div></div>
<div class="b" style="left:1242px;top:176px;width:74px;height:1px;background:#d6d6d6"></div>
<div class="b" style="left:1253px;top:134px;width:36px;height:27px;box-sizing:border-box;background:#fff;border:1px solid #cfcfcf;"><div class="b" style="left:5.6px;top:0;width:23.4px;height:25px;overflow:hidden"><div class="t" style="left:0;top:6.25px;font-size:14px;color:#333">49.4</div></div></div>
<div class="b" style="left:0px;top:232px;width:6px;height:1px;background:#d6d6d6"></div>
<div class="b" style="left:7px;top:232px;width:76px;height:1px;background:#d6d6d6"></div>
<div class="b" style="left:18px;top:190px;width:54px;height:27px;box-sizing:border-box;background:#fff;border:1px solid #cfcfcf;"><div class="b" style="left:5.6px;top:0;width:41.4px;height:25px;overflow:hidden"><div class="t" style="left:0;top:6.25px;font-size:14px;color:#333">0</div></div></div>
<div class="b" style="left:84px;top:232px;width:76px;height:1px;background:#d6d6d6"></div>
<div class="b" style="left:95px;top:190px;width:54px;height:27px;box-sizing:border-box;background:#fff;border:1px solid #cfcfcf;"><div class="b" style="left:5.6px;top:0;width:41.4px;height:25px;overflow:hidden"><div class="t" style="left:0;top:6.25px;font-size:14px;color:#333">49.46</div></div></div>
<div class="b" style="left:161px;top:232px;width:78px;height:1px;background:#d6d6d6"></div>
<div class="b" style="left:172px;top:190px;width:56px;height:27px;box-sizing:border-box;background:#fff;border:1px solid #cfcfcf;"><div class="b" style="left:5.6px;top:0;width:43.4px;height:25px;overflow:hidden"><div class="t" style="left:0;top:6.25px;font-size:14px;color:#333">8.2</div></div></div>
<div class="b" style="left:240px;top:232px;width:78px;height:1px;background:#d6d6d6"></div>
<div class="b" style="left:251px;top:190px;width:56px;height:27px;box-sizing:border-box;background:#fff;border:1px solid #cfcfcf;"><div class="b" style="left:5.6px;top:0;width:43.4px;height:25px;overflow:hidden"><div class="t" style="left:0;top:6.25px;font-size:14px;color:#333">20.59</div></div></div>
<div class="b" style="left:319px;top:232px;width:78px;height:1px;background:#d6d6d6"></div>
<div class="b" style="left:330px;top:190px;width:56px;height:27px;box-sizing:border-box;background:#fff;border:1px solid #cfcfcf;"><div class="b" style="left:5.6px;top:0;width:43.4px;height:25px;overflow:hidden"><div class="t" style="left:0;top:6.25px;font-size:14px;color:#333">1.85</div></div></div>
<div class="b" style="left:398px;top:232px;width:78px;height:1px;background:#d6d6d6"></div>
<div class="b" style="left:409px;top:190px;width:56px;height:27px;box-sizing:border-box;background:#fff;border:1px solid #cfcfcf;"><div class="b" style="left:5.6px;top:0;width:43.4px;height:25px;overflow:hidden"><div class="t" style="left:0;top:6.25px;font-size:14px;color:#333">8.82</div></div></div>
<div class="b" style="left:477px;top:232px;width:80px;height:1px;background:#d6d6d6"></div>
<div class="b" style="left:488px;top:190px;width:58px;height:27px;box-sizing:border-box;background:#fff;border:1px solid #cfcfcf;"><div class="b" style="left:5.6px;top:0;width:45.4px;height:25px;overflow:hidden"><div class="t" style="left:0;top:6.25px;font-size:14px;color:#333">10</div></div></div>
<div class="b" style="left:558px;top:232px;width:105px;height:1px;background:#d6d6d6"></div>
<div class="b" style="left:569px;top:190px;width:83px;height:27px;box-sizing:border-box;background:#fff;border:1px solid #cfcfcf;"><div class="b" style="left:5.6px;top:0;width:70.4px;height:25px;overflow:hidden"><div class="t" style="left:0;top:6.25px;font-size:14px;color:#333">0</div></div></div>
<div class="b" style="left:664px;top:232px;width:83px;height:1px;background:#d6d6d6"></div>
<div class="b" style="left:675px;top:190px;width:61px;height:27px;box-sizing:border-box;background:#fff;border:1px solid #cfcfcf;"><div class="b" style="left:5.6px;top:0;width:48.4px;height:25px;overflow:hidden"><div class="t" style="left:0;top:6.25px;font-size:14px;color:#333">0</div></div></div>
<div class="b" style="left:748px;top:232px;width:83px;height:1px;background:#d6d6d6"></div>
<div class="b" style="left:759px;top:190px;width:61px;height:27px;box-sizing:border-box;background:#fff;border:1px solid #cfcfcf;"><div class="b" style="left:5.6px;top:0;width:48.4px;height:25px;overflow:hidden"><div class="t" style="left:0;top:6.25px;font-size:14px;color:#333">0</div></div></div>
<div class="b" style="left:832px;top:232px;width:85px;height:1px;background:#d6d6d6"></div>
<div class="b" style="left:843px;top:190px;width:63px;height:27px;box-sizing:border-box;background:#f5f5f5;border:1px solid #cfcfcf;border-bottom:1.5px solid #b9b9b9;"><div class="b" style="left:5.6px;top:0;width:50.4px;height:25px;overflow:hidden"><div class="t" style="left:0;top:6.25px;font-size:14px;color:#bdbdbd">0</div></div></div>
<div class="b" style="left:918px;top:232px;width:85px;height:1px;background:#d6d6d6"></div>
<div class="b" style="left:929px;top:190px;width:63px;height:27px;box-sizing:border-box;background:#f5f5f5;border:1px solid #cfcfcf;border-bottom:1.5px solid #b9b9b9;"><div class="b" style="left:5.6px;top:0;width:50.4px;height:25px;overflow:hidden"><div class="t" style="left:0;top:6.25px;font-size:14px;color:#bdbdbd">49.46</div></div></div>
<div class="b" style="left:1004px;top:232px;width:77px;height:1px;background:#d6d6d6"></div>
<div class="b" style="left:1015px;top:190px;width:55px;height:27px;box-sizing:border-box;background:#fff;border:1px solid #cfcfcf;"><div class="b" style="left:5.6px;top:0;width:42.4px;height:25px;overflow:hidden"><div class="t" style="left:0;top:6.25px;font-size:14px;color:#333">0</div></div></div>
<div class="b" style="left:1082px;top:232px;width:92px;height:1px;background:#d6d6d6"></div>
<div class="b" style="left:1093px;top:190px;width:70px;height:27px;box-sizing:border-box;background:#fff;border:1px solid #cfcfcf;"><div class="b" style="left:5.6px;top:0;width:57.4px;height:25px;overflow:hidden"><div class="t" style="left:0;top:6.25px;font-size:14px;color:#333">0</div></div></div>
<div class="b" style="left:1175px;top:232px;width:66px;height:1px;background:#d6d6d6"></div>
<div class="b" style="left:1186px;top:190px;width:44px;height:27px;box-sizing:border-box;background:#fff;border:1px solid #cfcfcf;"><div class="b" style="left:5.6px;top:0;width:31.4px;height:25px;overflow:hidden"><div class="t" style="left:0;top:6.25px;font-size:14px;color:#333">0</div></div></div>
<div class="b" style="left:1242px;top:232px;width:74px;height:1px;background:#d6d6d6"></div>
<div class="b" style="left:1253px;top:190px;width:36px;height:27px;box-sizing:border-box;background:#fff;border:1px solid #cfcfcf;"><div class="b" style="left:5.6px;top:0;width:23.4px;height:25px;overflow:hidden"><div class="t" style="left:0;top:6.25px;font-size:14px;color:#333">49.4</div></div></div>
</div>
<div class="b" style="left:1325px;top:887px;width:17px;height:238px;background:#f1f1f1"></div>
<svg class="b" style="left:1327.5px;top:892px" width="12" height="8" viewBox="0 0 12 8"><path d="M2.5 6 L6 2 L9.5 6 Z" fill="#a3a3a3"/></svg>
<div class="b" style="left:1327px;top:904px;width:13px;height:30px;background:#c1c1c1"></div>
<svg class="b" style="left:1327px;top:1111.5px" width="12" height="8" viewBox="0 0 12 8"><path d="M2 2 L6 6 L10 2 Z" fill="#555"/></svg>
<div class="b" style="left:24px;top:1125px;width:1301px;height:17px;background:#f1f1f1"></div>
<svg class="b" style="left:28px;top:1128px" width="8" height="12" viewBox="0 0 8 12"><path d="M6 2 L2 6 L6 10 Z" fill="#555"/></svg>
<div class="b" style="left:248px;top:1127px;width:1060px;height:12px;background:#c1c1c1"></div>
<svg class="b" style="left:1312px;top:1128px" width="8" height="12" viewBox="0 0 8 12"><path d="M2 2 L6 6 L2 10 Z" fill="#a3a3a3"/></svg>
<div class="b" style="left:1325px;top:1125px;width:17px;height:17px;background:#fff"></div>
<div class="t" style="left:22.7px;top:1201.89px;font-size:15.6px;color:#4f6a7d;letter-spacing:-0.183px;">Additional Cost For Dependent</div>
<div class="b" style="left:22px;top:1231px;width:441px;height:72px;background:#fff;border:1px solid #d3d3d3;box-sizing:border-box"></div>
<div class="t" style="left:33.0px;top:1241.77px;font-size:14.8px;color:#2673a6;letter-spacing:-0.313px;">Add Additional Cost For Dependent</div>
<div class="t" style="left:39.2px;top:1274.04px;font-size:14.6px;color:#333;letter-spacing:-1.364px;">No</div>
<svg class="b" style="left:441px;top:1276px" width="13" height="9" viewBox="0 0 13 9"><path d="M1 1.5 L6.5 7 L12 1.5" fill="none" stroke="#8a8a8a" stroke-width="1"/></svg>
<div class="t" style="left:22.7px;top:1349.79px;font-size:15.6px;color:#4f6a7d;letter-spacing:-0.208px;">Demographic Eligibility Rule</div>
<div class="b" style="left:22px;top:1379px;width:441px;height:73px;background:#fff;border:1px solid #d3d3d3;box-sizing:border-box"></div>
<div class="t" style="left:37.5px;top:1390.87px;font-size:14.8px;color:#2673a6;letter-spacing:-0.344px;">Select Eligibility Rule</div>
<div class="t" style="left:171.5px;top:1395.00px;font-size:13px;color:#e3262b;">*</div>
<div class="t" style="left:38.6px;top:1421.77px;font-size:14.8px;color:#333;letter-spacing:-0.610px;">General Rule</div>
<svg class="b" style="left:441px;top:1424px" width="13" height="9" viewBox="0 0 13 9"><path d="M1 1.5 L6.5 7 L12 1.5" fill="none" stroke="#8a8a8a" stroke-width="1"/></svg>
<div class="b" style="left:490px;top:1396px;width:116px;height:34px;background:#99c141;border-radius:3px"></div>
<div class="t" style="left:520.2px;top:1405.23px;font-size:14.5px;color:#fff;letter-spacing:-0.380px;-webkit-text-stroke:0.4px #fff;">Edit Rule</div>
<div class="b" style="left:614px;top:1396px;width:116px;height:34px;background:#99c141;border-radius:3px"></div>
<div class="t" style="left:644.2px;top:1405.23px;font-size:14.5px;color:#fff;letter-spacing:-0.550px;-webkit-text-stroke:0.4px #fff;">Add Rule</div>
<div class="b" style="left:738px;top:1396px;width:153px;height:34px;background:#99c141;border-radius:3px"></div>
<div class="t" style="left:768.2px;top:1405.23px;font-size:14.5px;color:#fff;letter-spacing:-0.449px;-webkit-text-stroke:0.4px #fff;">View Summary</div>
<div class="b" style="left:22px;top:1496px;width:1322px;height:1px;background-image:linear-gradient(to right,#cfcfcf 50%,transparent 50%);background-size:6px 1px"></div>
<div class="b" style="left:998px;top:1519px;width:110px;height:34px;background:#999;border-radius:3px"></div>
<div class="t" style="left:1031.2px;top:1527.90px;font-size:14.3px;color:#fff;letter-spacing:-0.583px;-webkit-text-stroke:0.4px #fff;">Cancel</div>
<div class="b" style="left:1116px;top:1519px;width:110px;height:34px;background:#999;border-radius:3px"></div>
<div class="t" style="left:1153.2px;top:1527.90px;font-size:14.3px;color:#fff;letter-spacing:-0.689px;-webkit-text-stroke:0.4px #fff;">Reset</div>
<div class="b" style="left:1234px;top:1519px;width:110px;height:34px;background:#99c141;border-radius:3px"></div>
<div class="t" style="left:1274.4px;top:1527.90px;font-size:14.3px;color:#fff;letter-spacing:-1.332px;-webkit-text-stroke:0.4px #fff;">Save</div>
</body></html>
